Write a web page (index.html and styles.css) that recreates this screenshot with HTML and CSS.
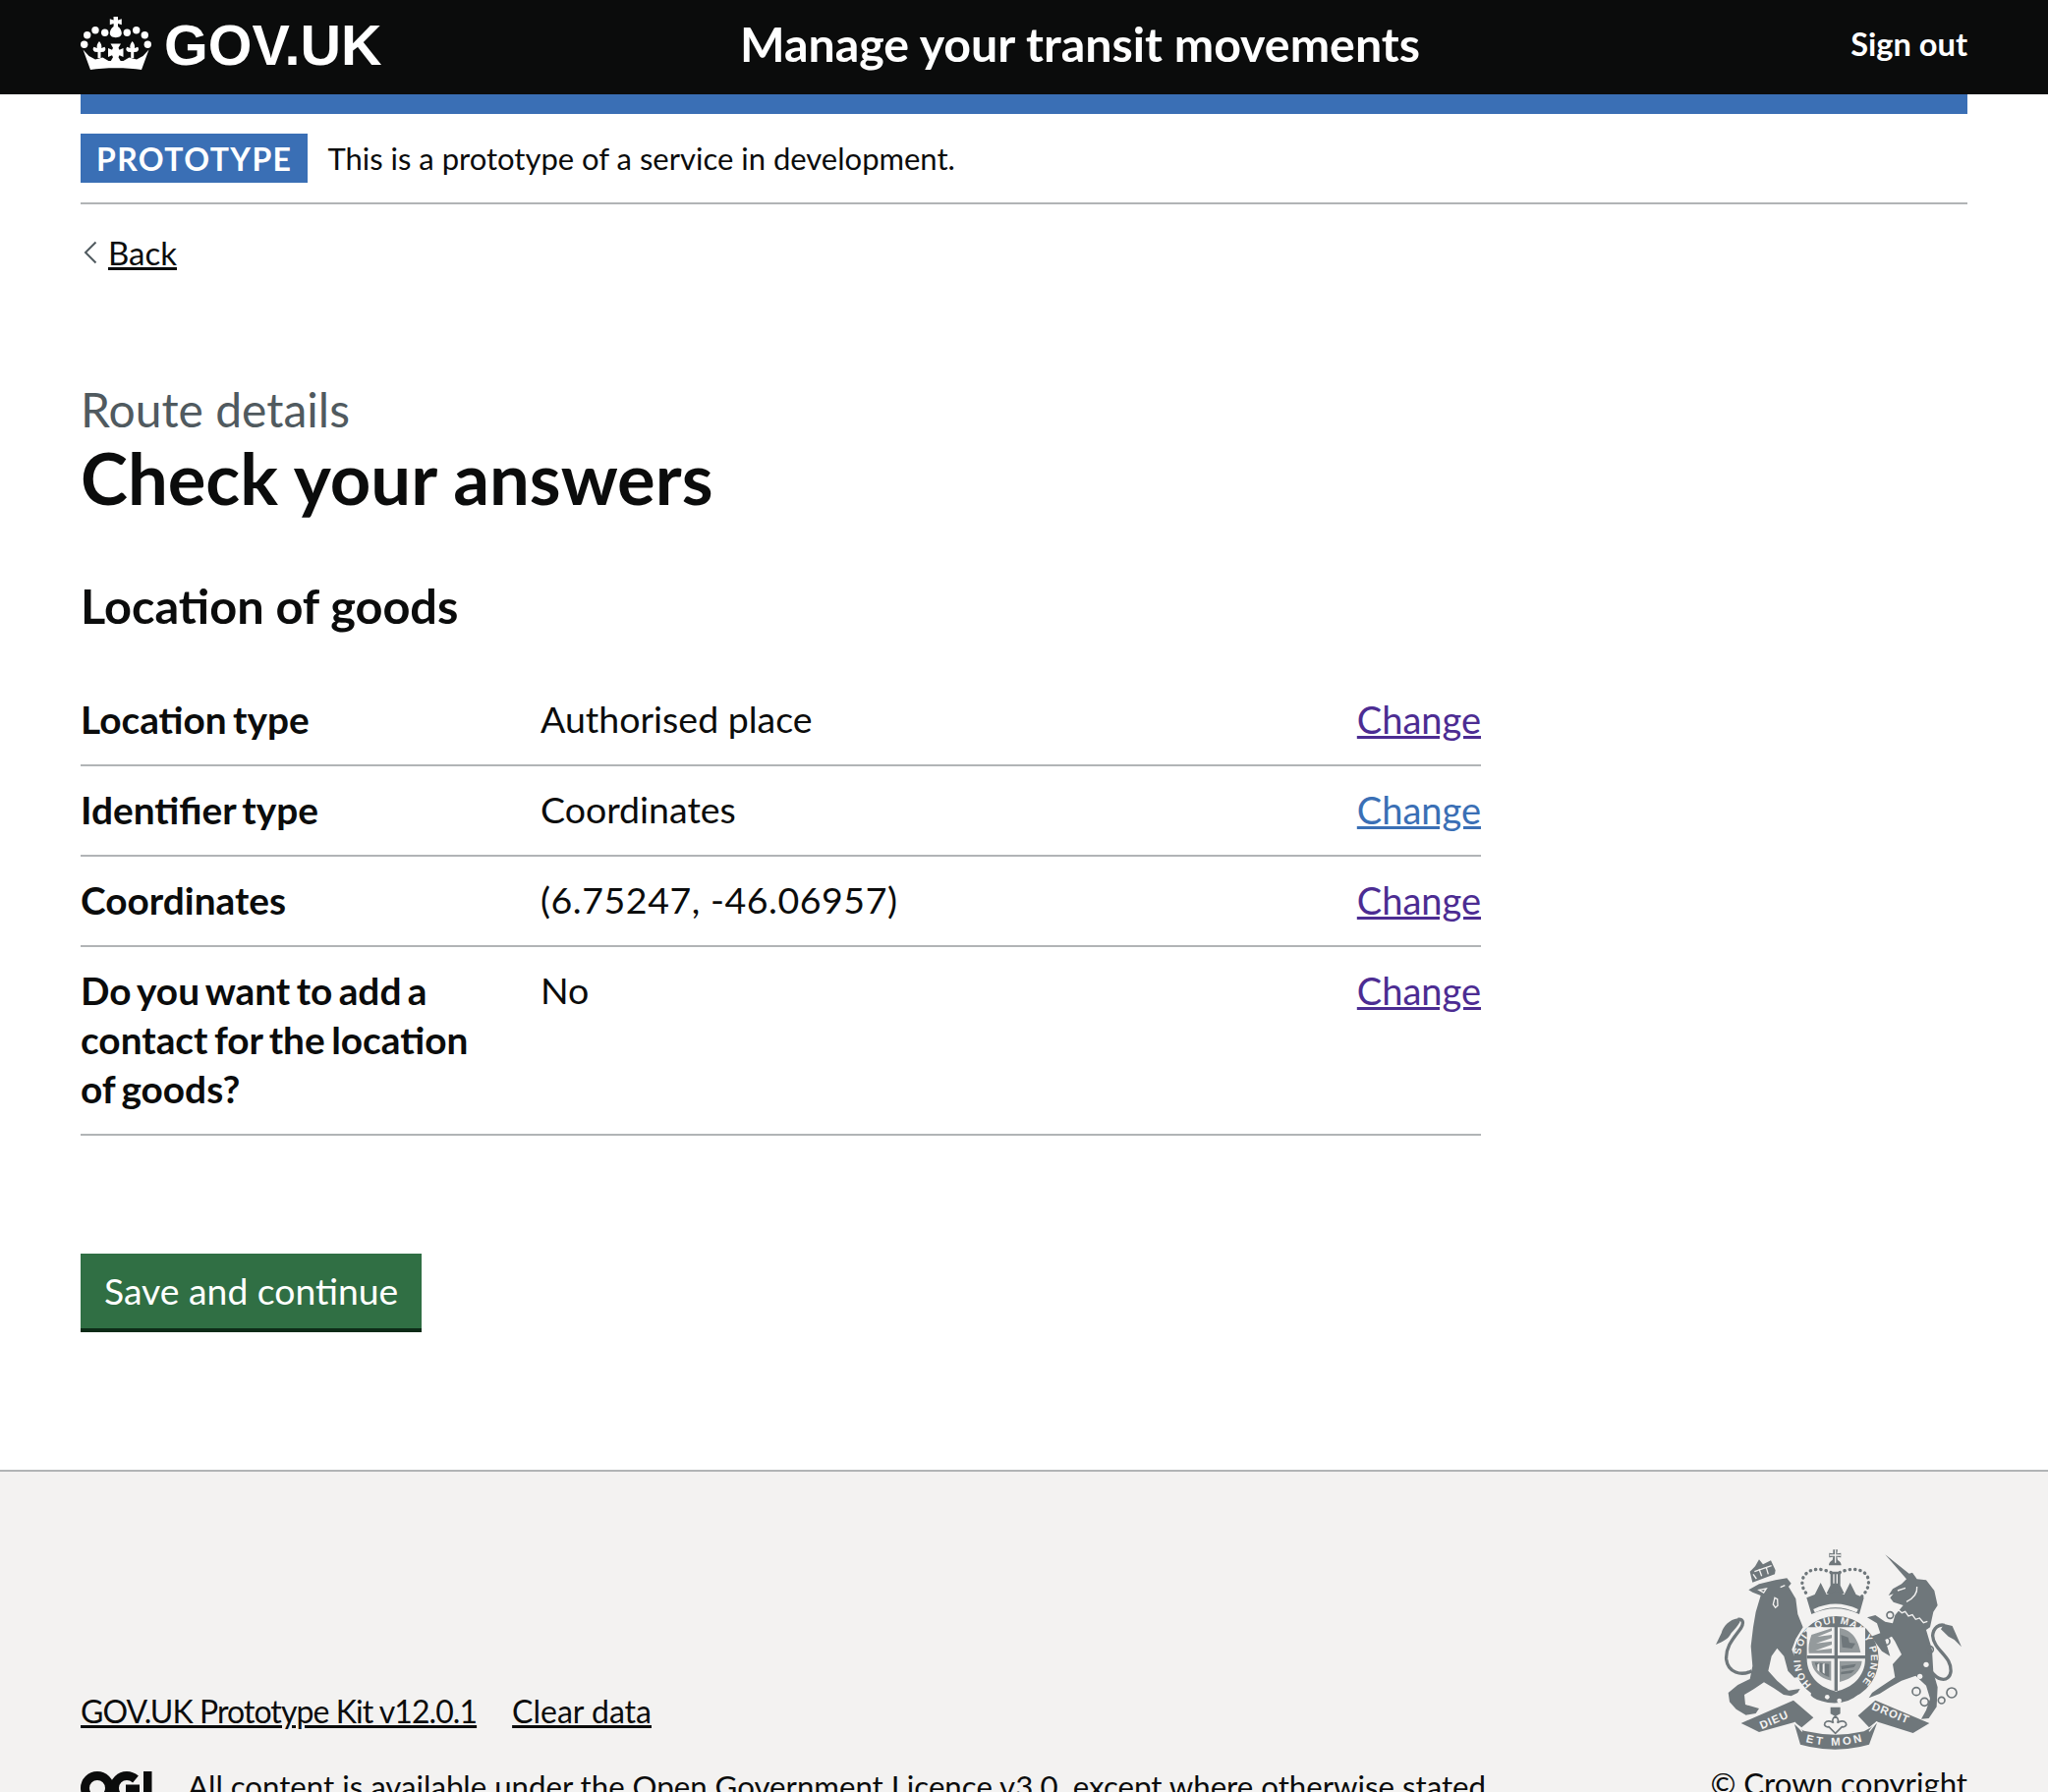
FILE: index.html
```html
<!DOCTYPE html>
<html lang="en">
  <head>
    <title>Check your answers</title>
    <link rel="stylesheet" href="styles.css">
  </head>
  <body>
    <header class="site-header">
      <div class="width-container header-row">
        <a class="logo" href="#">
          <svg class="crown" viewBox="0 0 72 54" aria-hidden="true">
            <g fill="#fff">
              <!-- cross and orb -->
              <path d="M33.500 0h4.500v3.400l3.800-1.200v6l-3.800-1.200v3c2.300 1.500 3.800 4.300 3.800 6.800 0 2.500-2.200 4.400-6 4.400s-6-1.900-6-4.400c0-2.500 1.500-5.300 3.800-6.800V7l-3.800 1.200v-6l3.800 1.200z"/>
              <circle cx="6.700" cy="18.700" r="3.700"/>
              <circle cx="15" cy="13.700" r="3.700"/>
              <circle cx="24.700" cy="16.300" r="3.700"/>
              <circle cx="47.300" cy="16.300" r="3.700"/>
              <circle cx="56.700" cy="13.700" r="3.700"/>
              <circle cx="65.300" cy="18.700" r="3.700"/>
              <circle cx="3.700" cy="28.300" r="3.700"/>
              <circle cx="68.300" cy="28.300" r="3.700"/>
              <!-- fleurs -->
              <path d="M19 25c2 2.500 2.800 4.500 2.200 7l3.300-1.300c1.500 1.800 1 4-1 5l-3 .3v6h-3v-6l-3-.3c-2-1-2.500-3.200-1-5l3.300 1.300c-.6-2.500.2-4.500 2.200-7z"/>
              <path d="M52.700 25c2 2.500 2.800 4.500 2.200 7l3.300-1.300c1.500 1.800 1 4-1 5l-3 .3v6h-3v-6l-3-.3c-2-1-2.500-3.200-1-5l3.300 1.300c-.6-2.500.2-4.500 2.200-7z"/>
              <path d="M30.500 27.500h10.500l-2.500 4.300 1 1.900 4-1.700v9l-4-1.700-1 1.900 2.500 4.300H30.500l2.500-4.300-1-1.900-4 1.700v-9l4 1.700 1-1.900z"/>
              <!-- band -->
              <path d="M2.500 33.500l6 6.500 6.500 3.500 7.500-2 6 3.500h15l6-3.500 7.500 2 6.500-3.500 6-6.500-7.500 20.500c-14-2.300-38-2.300-52 0z"/>
            </g>
          </svg>
          <span class="logo-text">GOV.UK</span>
        </a>
        <a class="service-name" href="#">Manage your transit movements</a>
        <a class="sign-out" href="#">Sign out</a>
      </div>
    </header>

    <div class="width-container">
      <div class="blue-bar"></div>
      <div class="phase-banner">
        <strong class="tag">PROTOTYPE</strong>
        <span class="phase-text">This is a prototype of a service in development.</span>
      </div>
      <a class="back-link" href="#">
        <svg class="back-arrow" viewBox="0 0 14 24" aria-hidden="true"><path d="M12.500 1.500 2 12l10.500 10.500" fill="none" stroke="#505a5f" stroke-width="2"/></svg>
        <span>Back</span>
      </a>

      <main class="main">
        <span class="caption">Route details</span>
        <h1>Check your answers</h1>
        <h2>Location of goods</h2>

        <dl class="summary">
          <div class="summary-row">
            <dt>Location type</dt>
            <dd>Authorised place</dd>
            <dd class="summary-action"><a class="visited" href="#">Change</a></dd>
          </div>
          <div class="summary-row">
            <dt>Identifier type</dt>
            <dd>Coordinates</dd>
            <dd class="summary-action"><a href="#">Change</a></dd>
          </div>
          <div class="summary-row">
            <dt>Coordinates</dt>
            <dd class="numbers">(6.75247, -46.06957)</dd>
            <dd class="summary-action"><a class="visited" href="#">Change</a></dd>
          </div>
          <div class="summary-row">
            <dt>Do you want to add a contact for the location of goods?</dt>
            <dd>No</dd>
            <dd class="summary-action"><a class="visited" href="#">Change</a></dd>
          </div>
        </dl>

        <a class="button" href="#">Save and continue</a>
      </main>
    </div>

    <footer class="site-footer">
      <div class="width-container footer-row">
        <div class="footer-meta">
          <div class="footer-links">
            <a class="kit-link" href="#">GOV.UK Prototype Kit v12.0.1</a>
            <a href="#">Clear data</a>
          </div>
          <div class="licence">
            <svg class="ogl" viewBox="0 0 82 34" aria-hidden="true">
              <g fill="none" stroke="#0b0c0c" stroke-width="9">
                <circle cx="17" cy="17" r="12.500"/>
                <path d="M56 8c-3-2.500-6-3.500-9-3.500-7 0-12.500 5.500-12.500 12.500S40 29.500 47 29.500c3 0 6-1 8.500-2.500V18H46"/>
              </g>
              <path fill="#0b0c0c" d="M64 0h8.500v26H82v8H64z"/>
            </svg>
            <span>All content is available under the <a href="#">Open Government Licence v3.0</a>, except where otherwise stated</span>
          </div>
        </div>
        <div class="footer-arms">
          <svg class="arms" viewBox="0 0 262 220" aria-hidden="true">
            <defs>
              <path id="garter-line" d="M430 497A108 108 0 1 1 584 491"/>
              <path id="et-mon-line" d="M412 672Q503 696 594 668"/>
            </defs>

            <!-- lion -->
            <g transform="scale(.3333)">
              <path class="arms-fill" d="M118 148 150 130 200 118 235 112 248 128 240 138 262 175 268 222 284 262 262 298 250 330 262 362 285 388 278 412 258 416 238 395 226 350 205 326 188 350 178 395 205 425 240 455 275 450 268 462 248 472 225 468 195 448 165 430 135 450 105 468 108 498 150 510 140 525 110 530 80 512 60 490 56 462 85 438 122 420 130 380 125 320 132 262 140 215 155 165 130 155Z"/>
              <path class="arms-fill" d="M85 235C60 238 40 260 35 280L18 315C40 305 55 300 65 280 75 268 85 258 92 245Z"/>
              <path class="arms-line thick" d="M128 395C95 412 55 400 50 360 47 320 75 292 95 264 105 246 100 236 85 238"/>
              <path class="arms-gap" d="M150 148l22-4-8 12zM198 172l8 4 1 20-7 6-7-10zM215 140l14-6"/>
              <path class="arms-fill" d="M130 125 122 92 138 76 150 55 162 70 186 58 200 88 198 100Z"/>
              <path class="arms-gap" d="M132 100l10 14M150 84l8 22M172 80l6 20M136 92l52-18"/>
            </g>

            <!-- unicorn -->
            <g transform="translate(120 0) scale(.3333)">
              <path class="arms-fill" d="M175 40 248 98 258 95 272 115 300 118 325 150 335 195 322 215 312 262 300 270 318 330 322 400 335 445 332 505 308 540 285 542 300 515 312 480 300 440 268 410 225 425 190 445 158 465 125 478 135 462 160 445 205 415 198 375 225 345 205 305 195 290 175 300 190 350 165 335 132 290 160 280 150 250 120 232 145 225 175 245 198 250 205 225 230 195 200 185 190 172 200 160 185 165 198 145 225 130 240 115Z"/>
              <path class="arms-gap" d="M213 150l24-8M272 138c2 20-8 34-32 46M214 208l12 10 10-4 10 14 12-4 10 14 12-4 12 14 12-4"/>
              <path class="arms-line thick" d="M318 400C355 445 392 410 368 365 352 338 322 320 320 288 322 262 340 252 356 256"/>
              <path class="arms-fill" d="M355 252 380 258 408 322 386 300 368 290 345 268Z"/>
              <g class="arms-line">
                <circle cx="190" cy="225" r="10"/>
                <circle cx="178" cy="305" r="11"/>
                <circle cx="312" cy="330" r="10"/>
                <circle cx="270" cy="458" r="12"/>
                <circle cx="295" cy="490" r="12"/>
                <circle cx="347" cy="485" r="10"/>
                <circle cx="378" cy="462" r="15"/>
              </g>
              <circle class="arms-hole" cx="300" cy="376" r="8"/>
              <circle class="arms-hole" cx="281" cy="412" r="8"/>
            </g>

            <!-- royal crown, shield, garter, scroll -->
            <g transform="translate(-40 -20) scale(.3333)">
              <path class="arms-fill" d="M496 85h14l-2 12 12-2v14l-12-2 2 10c7 3 11 9 11 16h-38c0-7 4-13 11-16l2-10-12 2V95l12 2z"/>
              <path class="arms-gap" d="M503 85v40M486 102h34"/>
              <path class="arms-fill" d="M488 152h30v42l12 24-27 8-27-8 12-24z"/>
              <path class="arms-gap" d="M498 160v28M508 160v28"/>
              <path class="arms-line dots" d="M490 155C460 140 420 140 405 170 395 195 410 215 422 228M516 155C546 140 590 140 602 170 610 195 596 215 584 228"/>
              <path class="arms-fill" d="M415 232 440 222 458 186 476 222 503 212 530 222 548 186 566 222 590 232 576 282Q503 248 430 282Z"/>
              <path class="arms-gap thick" d="M438 272Q503 240 570 272"/>

              <circle class="arms-fill" cx="505" cy="418" r="130"/>
              <path class="arms-hole" d="M416 322h178v96c0 56-42 90-89 100-47-10-89-44-89-100z"/>
              <g class="arms-fill">
                <path d="M500 316h10v200h-10z"/>
                <path d="M416 408h178v10H416z"/>
                <path d="M430 345l62-20v8l-44 18 44-6v10l-48 16 48-6v10l-50 18 50-6v14h-70c-2-18 0-34 8-56zM430 425h60v60c-34-8-58-30-60-60zM516 425h68c-2 28-28 54-68 64zM516 325c28 4 54 22 64 74h-64z" opacity=".72"/>
                <path d="M520 345l22 8 4 16 18 2-10 16-30-4zM520 440l46-6-6 10-38 6zM520 458l42-6-10 10-32 4zM440 430l44 4v40c-22-6-38-22-44-44z"/>
              </g>
              <path class="arms-hole" d="M448 436l6-4v26l-6-6zM464 434l6-2v32l-6-4z"/>
              <text class="garter-text">
                <textPath href="#garter-line" textLength="505">HONI SOIT QUI MAL Y PENSE</textPath>
              </text>

              <path class="arms-fill" d="M432 498 470 520Q510 534 560 505L578 522Q540 560 480 552 440 544 428 530Z"/>
              <circle class="arms-hole" cx="478" cy="535" r="7"/>
              <circle class="arms-hole" cx="515" cy="546" r="7"/>

              <path class="arms-fill" d="M215 615 375 545 436 598 400 628 378 612 270 642Z"/>
              <path class="arms-fill" d="M790 615 625 545 572 592 606 628 628 610 740 645Z"/>
              <path class="arms-fill" d="M378 618Q400 640 415 640 503 660 590 640 610 630 630 615L606 680Q503 710 396 680Z"/>
              <path class="arms-gap" d="M378 612 402 640M630 610 606 640"/>
              <text class="scroll-text" transform="translate(278 634) rotate(-24)">DIEU</text>
              <text class="scroll-text" transform="translate(612 572) rotate(22)">DROIT</text>
              <text class="scroll-text">
                <textPath href="#et-mon-line" textLength="178">ET MON</textPath>
              </text>

              <path class="arms-fill" d="M488 566h30v20l-15 8-15-8z"/>
              <path class="arms-line fleur" d="M503 594c10 6 10 14 6 20 8-6 20-8 26 0 4 8-4 14-12 12-6 6-12 12-20 20-8-8-14-14-20-20-8 2-16-4-12-12 6-8 18-6 26 0-4-6-4-14 6-20z"/>
            </g>
          </svg>
          <span class="copyright">© Crown copyright</span>
        </div>
      </div>
    </footer>
  </body>
</html>
```

FILE: styles.css
```css
html,
body {
  height: 1824px;
  overflow: hidden;
}
body {
  margin: 0;
  font-family: "Lato", "Liberation Sans", sans-serif;
  color: #0b0c0c;
  background: #fff;
}
.width-container {
  width: 1920px;
  margin: 0 auto;
}
.site-header {
  background: #0b0c0c;
  height: 96px;
}
.header-row {
  display: flex;
  align-items: center;
  height: 88px;
  padding-bottom: 8px;
}
.logo {
  display: flex;
  align-items: center;
  gap: 13px;
  color: #fff;
  text-decoration: none;
  width: 671px;
}
.crown {
  width: 72px;
  height: 54px;
}
.logo-text {
  padding-top: 3px;
  font-size: 57.5px;
  font-weight: 700;
  font-family: "Liberation Sans", sans-serif;
}
.service-name {
  color: #fff;
  text-decoration: none;
  font-size: 48.3px;
  font-weight: 700;
}
.sign-out {
  color: #fff;
  text-decoration: none;
  font-size: 32.6px;
  font-weight: 700;
  margin-left: auto;
}
.blue-bar {
  height: 20px;
  background: #3a6fb5;
}
.phase-banner {
  display: flex;
  align-items: center;
  gap: 20px;
  padding: 20px 0;
  border-bottom: 2px solid #b1b4b6;
}
.tag {
  background: #3a6fb5;
  color: #fff;
  font-size: 32px;
  line-height: 52px;
  height: 50px;
  padding: 0 16px;
  letter-spacing: 1.4px;
}
.phase-text {
  font-size: 31px;
}
.back-link {
  display: inline-flex;
  align-items: center;
  gap: 11px;
  margin: 29px 0 0 3px;
  font-size: 33px;
  line-height: 40px;
  color: #0b0c0c;
}
.back-arrow {
  width: 14px;
  height: 24px;
}
.main {
  padding-top: 110px;
}
.caption {
  display: block;
  font-size: 48px;
  line-height: 60px;
  color: #505a5f;
}
h1 {
  margin: 0 0 60px;
  font-size: 72.4px;
  line-height: 79px;
}
h2 {
  margin: 0 0 42px;
  font-size: 48.7px;
  line-height: 60px;
}
.summary {
  width: 1425px;
  margin: 0 0 120px;
}
.summary-row {
  display: flex;
  border-bottom: 2px solid #b1b4b6;
  padding: 19px 0 21px;
  font-size: 37.5px;
  line-height: 50px;
}
.summary-row dt {
  width: 410px;
  margin-right: 58px;
  font-size: 38.8px;
  font-weight: 700;
  word-spacing: -3px;
}
.summary-row dd {
  margin: 0;
  flex: 1;
}
.summary-row .numbers {
  letter-spacing: .55px;
}
.summary-row .summary-action {
  flex: none;
  width: 200px;
  font-size: 38px;
  text-align: right;
}
.summary-action a {
  color: #3a6fb5;
}
.summary-action a.visited {
  color: #4c2c92;
}
.button {
  display: inline-block;
  background: #306f44;
  color: #fff;
  text-decoration: none;
  font-size: 37.3px;
  line-height: 50px;
  padding: 13px 24px;
  border-bottom: 4px solid #0d2b17;
}
.site-footer {
  background: #f3f2f1;
  border-top: 2px solid #b1b4b6;
  margin-top: 140px;
  height: 400px;
}
.footer-row {
  display: flex;
  justify-content: space-between;
  padding-top: 71px;
}
.footer-meta {
  padding-top: 153px;
}
.footer-links {
  display: flex;
  gap: 36px;
  font-size: 32px;
  line-height: 40px;
}
.kit-link {
  letter-spacing: -.93px;
}
.footer-links a,
.licence a,
.copyright {
  color: #0b0c0c;
}
.licence {
  display: flex;
  align-items: flex-start;
  gap: 27px;
  margin-top: 36px;
  font-size: 31.2px;
  line-height: 40px;
}
.licence a {
  text-decoration: none;
}
.ogl {
  flex: none;
  width: 82px;
  height: 34px;
  margin-top: 5px;
}
.footer-arms {
  display: flex;
  flex-direction: column;
  align-items: flex-end;
}
.arms {
  width: 262px;
  height: 220px;
}
.arms-fill {
  fill: #6f777b;
}
.arms-hole {
  fill: #f3f2f1;
}
.arms-line {
  fill: none;
  stroke: #6f777b;
  stroke-width: 5;
}
.arms-line.thick {
  stroke-width: 10;
}
.arms-line.dots {
  stroke-width: 10;
  stroke-linecap: round;
  stroke-dasharray: 1 15;
}
.arms-line.fleur {
  fill: #f3f2f1;
  stroke-width: 5;
}
.arms-gap {
  fill: none;
  stroke: #f3f2f1;
  stroke-width: 4;
}
.arms-gap.thick {
  stroke-width: 11;
}
.garter-text,
.scroll-text {
  font-family: "Liberation Sans", sans-serif;
  font-weight: 700;
  fill: #f3f2f1;
}
.garter-text {
  font-size: 30px;
}
.scroll-text {
  font-size: 34px;
  letter-spacing: 3px;
}
.copyright {
  font-size: 31.2px;
  line-height: 40px;
  margin-top: 6px;
}
```
